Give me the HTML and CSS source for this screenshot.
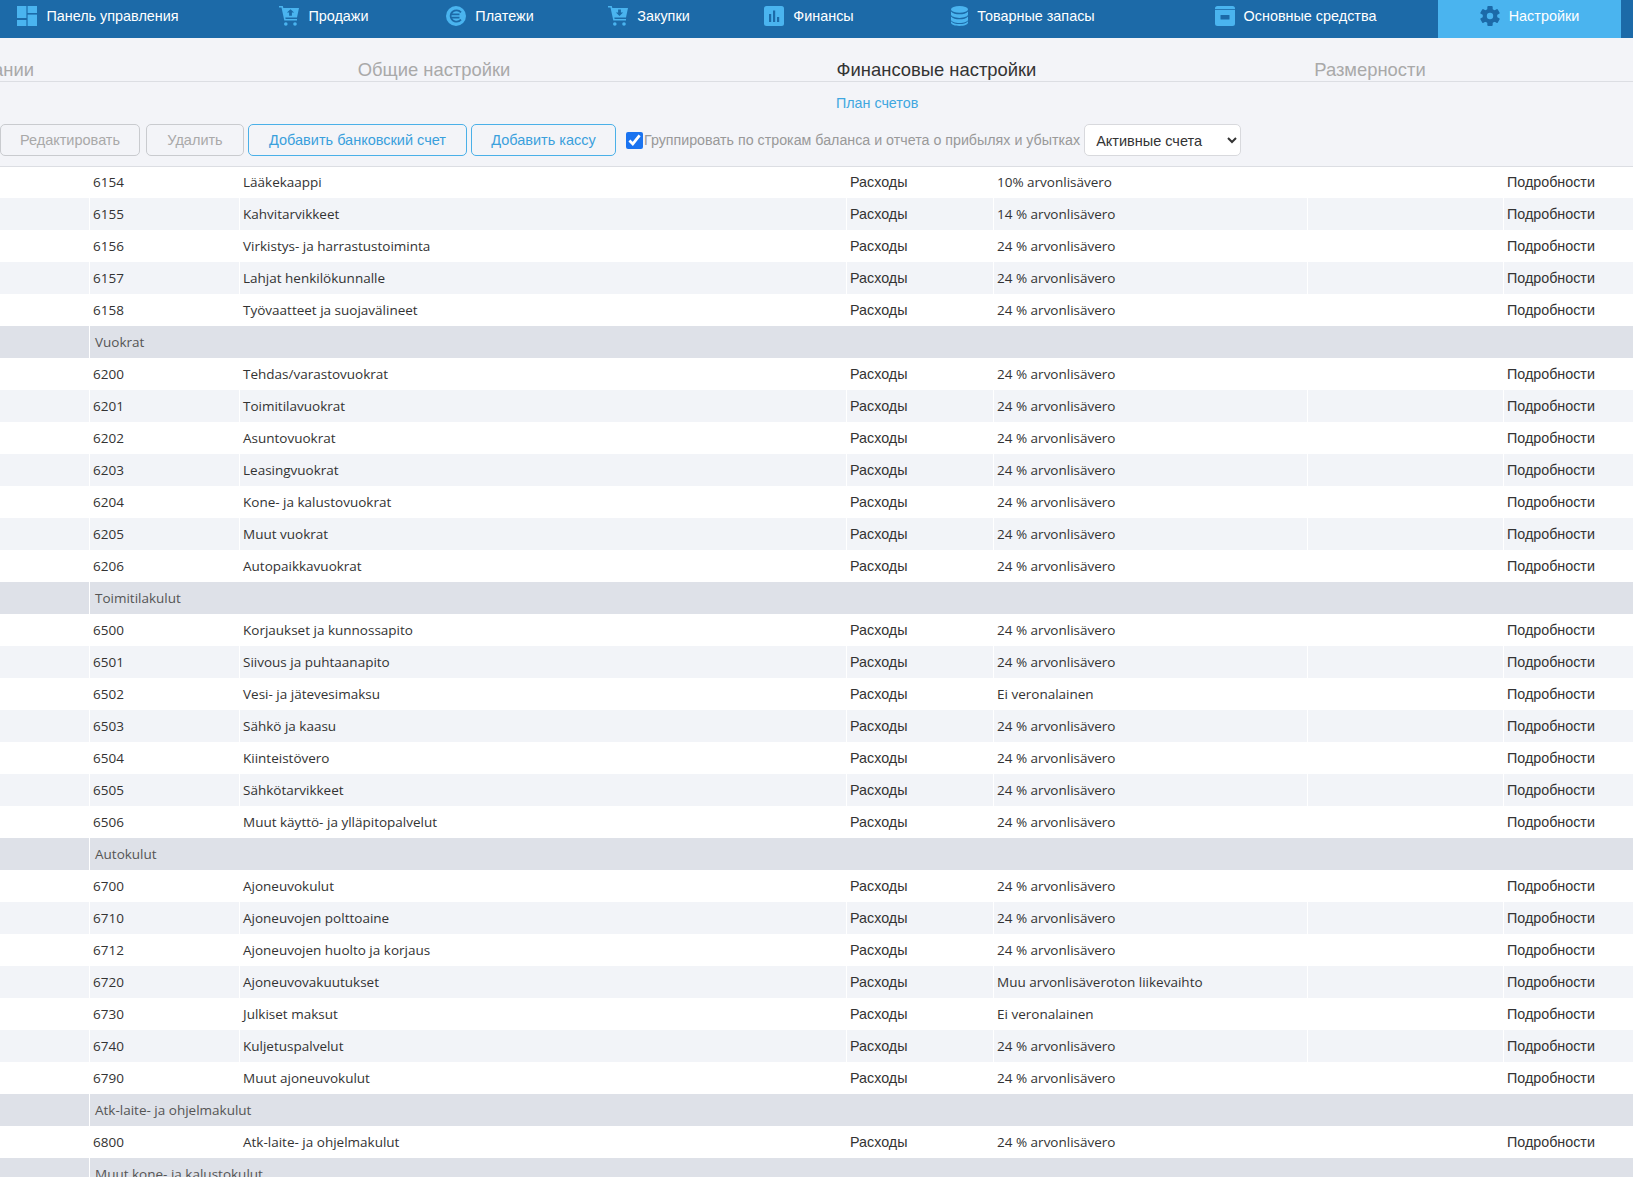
FILE: index.html
```html
<!DOCTYPE html>
<html lang="ru">
<head>
  <meta charset="UTF-8" />
  <title>Финансовые настройки</title>
  <link rel="stylesheet" href="styles.css">
</head>
<body>
  <nav class="nav">
    <a class="nav-item nav-first">
      <svg class="icon" viewBox="0 0 20 20"><rect x="0" y="0" width="9.4" height="12"/><rect x="0" y="14" width="9.4" height="6"/><rect x="10.6" y="0" width="9.4" height="7"/><rect x="10.6" y="8.6" width="9.4" height="11.4"/></svg>
      Панель управления
    </a>
    <a class="nav-item">
      <svg class="icon" viewBox="0 0 20 20"><path d="M2.5 1.5H0V0h3.8l.5 2H20l-2 9.5H6.3l.3 1.6H18v1.5H5.3L2.5 1.5z"/><path class="cut" d="M11.5 3.2l3.6 3.4h-2.2v3.2h-2.8V6.6H7.9z"/><circle cx="6.8" cy="18" r="1.8"/><circle cx="16" cy="18" r="1.8"/></svg>
      Продажи
    </a>
    <a class="nav-item">
      <svg class="icon" viewBox="0 0 20 20"><circle cx="10" cy="10" r="10"/><path class="cut-line" d="M15 6.3A6 6 0 0 0 4.6 10 6 6 0 0 0 15 13.7M5 8.4h8.5M5 11.6h8.5"/></svg>
      Платежи
    </a>
    <a class="nav-item">
      <svg class="icon" viewBox="0 0 20 20"><path d="M2.5 1.5H0V0h3.8l.5 2H20l-2 9.5H6.3l.3 1.6H18v1.5H5.3L2.5 1.5z"/><path class="cut" d="M11.5 10l-3.6-3.4h2.2V3.4h2.8v3.2h2.2z"/><circle cx="6.8" cy="18" r="1.8"/><circle cx="16" cy="18" r="1.8"/></svg>
      Закупки
    </a>
    <a class="nav-item">
      <svg class="icon" viewBox="0 0 20 20"><rect width="20" height="20" rx="2.5"/><rect class="cut" x="5" y="8" width="2.2" height="8"/><rect class="cut" x="9" y="4.5" width="2.2" height="11.5"/><rect class="cut" x="13" y="11" width="2.2" height="5"/></svg>
      Финансы
    </a>
    <a class="nav-item">
      <svg class="icon icon-db" viewBox="0 0 17 20"><ellipse cx="8.5" cy="3.4" rx="8.5" ry="3.4"/><path d="M0 5.4C1.5 7.6 5 8.2 8.5 8.2S15.5 7.6 17 5.4v3.2C17 10.500 13 11.900 8.500 11.900S0 10.500 0 8.600z"/><path d="M0 10.500C1.500 12.700 5 13.300 8.500 13.300S15.500 12.700 17 10.500v3.300C17 15.700 13 17 8.500 17S0 15.700 0 13.800z"/><path d="M0 15.200C1.500 17.400 5 18 8.500 18S15.500 17.400 17 15.200v1.400C17 18.700 13 20 8.500 20S0 18.700 0 16.600z"/></svg>
      Товарные запасы
    </a>
    <a class="nav-item">
      <svg class="icon" viewBox="0 0 20 20"><path d="M2.500 0h15A2.500 2.500 0 0 1 20 2.500V17.500A2.500 2.500 0 0 1 17.500 20h-15A2.500 2.500 0 0 1 0 17.500V2.500A2.500 2.500 0 0 1 2.500 0z"/><rect class="cut" x="0" y="3" width="20" height="0.8"/><rect class="cut" x="5.500" y="9" width="9" height="4.500" rx="0.500"/></svg>
      Основные средства
    </a>
    <a class="nav-item nav-active">
      <svg class="icon icon-gear" viewBox="0 0 20 20"><rect x="7.300" y="0" width="5.400" height="20" rx="1"/><rect x="7.300" y="0" width="5.400" height="20" rx="1" transform="rotate(60 10 10)"/><rect x="7.300" y="0" width="5.400" height="20" rx="1" transform="rotate(120 10 10)"/><circle cx="10" cy="10" r="7.300"/><circle class="hole" cx="10" cy="10" r="3.200"/></svg>
      Настройки
    </a>
  </nav>

  <div class="tabs">
    <div class="tab tab-cut">Настройки компании</div>
    <div class="tab">Общие настройки</div>
    <div class="tab tab-active">Финансовые настройки</div>
    <div class="tab">Размерности</div>
  </div>

  <div class="subtabs"><a class="subtab">План счетов</a></div>

  <div class="toolbar">
    <button class="btn btn-edit" disabled>Редактировать</button>
    <button class="btn btn-delete" disabled>Удалить</button>
    <button class="btn btn-primary btn-bank">Добавить банковский счет</button>
    <button class="btn btn-primary btn-cash">Добавить кассу</button>
    <label class="group-check"><input type="checkbox" checked>Группировать по строкам баланса и отчета о прибылях и убытках</label>
    <select class="filter"><option>Активные счета</option></select>
  </div>

  <table class="accounts">
    <colgroup>
      <col class="col-a"><col class="col-b"><col class="col-c"><col class="col-d"><col class="col-e"><col class="col-f"><col>
    </colgroup>
    <tbody>
      <tr><td></td><td>6154</td><td>Lääkekaappi</td><td class="ru">Расходы</td><td>10% arvonlisävero</td><td></td><td class="ru">Подробности</td></tr>
      <tr><td></td><td>6155</td><td>Kahvitarvikkeet</td><td class="ru">Расходы</td><td>14 % arvonlisävero</td><td></td><td class="ru">Подробности</td></tr>
      <tr><td></td><td>6156</td><td>Virkistys- ja harrastustoiminta</td><td class="ru">Расходы</td><td>24 % arvonlisävero</td><td></td><td class="ru">Подробности</td></tr>
      <tr><td></td><td>6157</td><td>Lahjat henkilökunnalle</td><td class="ru">Расходы</td><td>24 % arvonlisävero</td><td></td><td class="ru">Подробности</td></tr>
      <tr><td></td><td>6158</td><td>Työvaatteet ja suojavälineet</td><td class="ru">Расходы</td><td>24 % arvonlisävero</td><td></td><td class="ru">Подробности</td></tr>
      <tr class="group"><td></td><td colspan="6">Vuokrat</td></tr>
      <tr><td></td><td>6200</td><td>Tehdas/varastovuokrat</td><td class="ru">Расходы</td><td>24 % arvonlisävero</td><td></td><td class="ru">Подробности</td></tr>
      <tr><td></td><td>6201</td><td>Toimitilavuokrat</td><td class="ru">Расходы</td><td>24 % arvonlisävero</td><td></td><td class="ru">Подробности</td></tr>
      <tr><td></td><td>6202</td><td>Asuntovuokrat</td><td class="ru">Расходы</td><td>24 % arvonlisävero</td><td></td><td class="ru">Подробности</td></tr>
      <tr><td></td><td>6203</td><td>Leasingvuokrat</td><td class="ru">Расходы</td><td>24 % arvonlisävero</td><td></td><td class="ru">Подробности</td></tr>
      <tr><td></td><td>6204</td><td>Kone- ja kalustovuokrat</td><td class="ru">Расходы</td><td>24 % arvonlisävero</td><td></td><td class="ru">Подробности</td></tr>
      <tr><td></td><td>6205</td><td>Muut vuokrat</td><td class="ru">Расходы</td><td>24 % arvonlisävero</td><td></td><td class="ru">Подробности</td></tr>
      <tr><td></td><td>6206</td><td>Autopaikkavuokrat</td><td class="ru">Расходы</td><td>24 % arvonlisävero</td><td></td><td class="ru">Подробности</td></tr>
      <tr class="group"><td></td><td colspan="6">Toimitilakulut</td></tr>
      <tr><td></td><td>6500</td><td>Korjaukset ja kunnossapito</td><td class="ru">Расходы</td><td>24 % arvonlisävero</td><td></td><td class="ru">Подробности</td></tr>
      <tr><td></td><td>6501</td><td>Siivous ja puhtaanapito</td><td class="ru">Расходы</td><td>24 % arvonlisävero</td><td></td><td class="ru">Подробности</td></tr>
      <tr><td></td><td>6502</td><td>Vesi- ja jätevesimaksu</td><td class="ru">Расходы</td><td>Ei veronalainen</td><td></td><td class="ru">Подробности</td></tr>
      <tr><td></td><td>6503</td><td>Sähkö ja kaasu</td><td class="ru">Расходы</td><td>24 % arvonlisävero</td><td></td><td class="ru">Подробности</td></tr>
      <tr><td></td><td>6504</td><td>Kiinteistövero</td><td class="ru">Расходы</td><td>24 % arvonlisävero</td><td></td><td class="ru">Подробности</td></tr>
      <tr><td></td><td>6505</td><td>Sähkötarvikkeet</td><td class="ru">Расходы</td><td>24 % arvonlisävero</td><td></td><td class="ru">Подробности</td></tr>
      <tr><td></td><td>6506</td><td>Muut käyttö- ja ylläpitopalvelut</td><td class="ru">Расходы</td><td>24 % arvonlisävero</td><td></td><td class="ru">Подробности</td></tr>
      <tr class="group"><td></td><td colspan="6">Autokulut</td></tr>
      <tr><td></td><td>6700</td><td>Ajoneuvokulut</td><td class="ru">Расходы</td><td>24 % arvonlisävero</td><td></td><td class="ru">Подробности</td></tr>
      <tr><td></td><td>6710</td><td>Ajoneuvojen polttoaine</td><td class="ru">Расходы</td><td>24 % arvonlisävero</td><td></td><td class="ru">Подробности</td></tr>
      <tr><td></td><td>6712</td><td>Ajoneuvojen huolto ja korjaus</td><td class="ru">Расходы</td><td>24 % arvonlisävero</td><td></td><td class="ru">Подробности</td></tr>
      <tr><td></td><td>6720</td><td>Ajoneuvovakuutukset</td><td class="ru">Расходы</td><td>Muu arvonlisäveroton liikevaihto</td><td></td><td class="ru">Подробности</td></tr>
      <tr><td></td><td>6730</td><td>Julkiset maksut</td><td class="ru">Расходы</td><td>Ei veronalainen</td><td></td><td class="ru">Подробности</td></tr>
      <tr><td></td><td>6740</td><td>Kuljetuspalvelut</td><td class="ru">Расходы</td><td>24 % arvonlisävero</td><td></td><td class="ru">Подробности</td></tr>
      <tr><td></td><td>6790</td><td>Muut ajoneuvokulut</td><td class="ru">Расходы</td><td>24 % arvonlisävero</td><td></td><td class="ru">Подробности</td></tr>
      <tr class="group"><td></td><td colspan="6">Atk-laite- ja ohjelmakulut</td></tr>
      <tr><td></td><td>6800</td><td>Atk-laite- ja ohjelmakulut</td><td class="ru">Расходы</td><td>24 % arvonlisävero</td><td></td><td class="ru">Подробности</td></tr>
      <tr class="group"><td></td><td colspan="6">Muut kone- ja kalustokulut</td></tr>
    </tbody>
  </table>
</body>
</html>
```

FILE: styles.css
```css
* {
  box-sizing: border-box;
}

html, body {
  height: 100%;
  overflow: hidden;
}

body {
  margin: 0;
  background: #f3f4f8;
  color: #333;
  font-family: "Liberation Sans", Arial, sans-serif;
  font-size: 15px;
}

/* top nav */
.nav {
  display: grid;
  grid-template-columns: 241px 166px 166px 152px 168px 260px 285px 183px 1fr;
  height: 38px;
  background: #1c6aa8;
}

.nav-item {
  display: flex;
  align-items: center;
  justify-content: center;
  gap: 9px;
  height: 32px;
  color: #fff;
  font-size: 14.4px;
  white-space: nowrap;
}

.nav-first {
  padding-right: 45px;
}

.nav-active {
  height: 38px;
  padding-bottom: 6px;
  background: #4ab4ef;
}

.icon {
  flex: none;
  width: 20px;
  height: 20px;
  fill: #4ab4ef;
}

.icon-db {
  width: 17px;
}

.icon .cut {
  fill: #1c6aa8;
}

.icon .cut-line {
  fill: none;
  stroke: #1c6aa8;
  stroke-width: 1.8;
}

.icon-gear {
  fill: #1c6aa8;
}

.icon-gear .hole {
  fill: #4ab4ef;
}

/* tabs */
.tabs {
  display: grid;
  grid-template-columns: 196px 476px 529px 338px;
  height: 44px;
  border-bottom: 1px solid #dcdee3;
}

.tab {
  padding-top: 21px;
  color: #a9a9a9;
  font-size: 18.4px;
  line-height: 22px;
  text-align: center;
  white-space: nowrap;
}

.tab-cut {
  display: flex;
  justify-content: flex-end;
  padding-right: 162px;
}

.tab-active {
  color: #333;
}

.subtabs {
  height: 42px;
  padding: 12px 0 0 836px;
  line-height: 18px;
}

.subtab {
  color: #3fa7e0;
  font-size: 14.3px;
}

/* toolbar */
.toolbar {
  display: flex;
  align-items: center;
  height: 43px;
  padding-bottom: 10px;
  border-bottom: 1px solid #dcdee3;
}

.btn {
  height: 32px;
  margin-right: 4px;
  padding: 0;
  border: 1px solid #c9cbcf;
  border-radius: 5px;
  background: transparent;
  color: #a9a9a9;
  font-family: inherit;
  font-size: 14.5px;
}

.btn-edit {
  width: 140px;
  margin-right: 6px;
}

.btn-delete {
  width: 98px;
}

.btn-bank {
  width: 219px;
}

.btn-cash {
  width: 145px;
}

.btn-primary {
  border-color: #4ab0e8;
  color: #3aa0dc;
}

.group-check {
  display: flex;
  align-items: center;
  margin-left: 6px;
  color: #999;
  font-size: 14.25px;
  white-space: nowrap;
}

.group-check input {
  width: 17px;
  height: 17px;
  margin: 0 1px 0 0;
  accent-color: #1a73f0;
}

.filter {
  width: 157px;
  height: 32px;
  margin-left: 4px;
  padding: 1px 0 0 7px;
  border: 1px solid #d8d9dd;
  border-radius: 5px;
  background: #fff;
  color: #333;
  font-family: inherit;
  font-size: 14.5px;
}

/* accounts table */
.accounts {
  width: 100%;
  table-layout: fixed;
  border-collapse: separate;
  border-spacing: 0;
  font-family: "Open Sans", "Noto Sans", sans-serif;
  font-size: 13.5px;
}

.col-a { width: 89px; }
.col-b { width: 150px; }
.col-c { width: 607px; }
.col-d { width: 147px; }
.col-e { width: 314px; }
.col-f { width: 196px; }

.accounts td {
  height: 32px;
  padding: 0 3px;
  border-left: 1px solid #fff;
  white-space: nowrap;
}

.accounts td:first-child {
  border-left: 0;
}

.accounts tr:first-child td {
  height: 31px;
  padding-bottom: 1px;
}

.accounts tr {
  background: #fff;
}

.accounts tr:nth-child(even) {
  background: #f2f4f8;
}

.accounts .ru {
  font-family: "Liberation Sans", Arial, sans-serif;
  font-size: 14.3px;
}

.accounts tr.group {
  background: #dee1e8;
  color: #555;
}

.accounts tr.group td {
  padding-left: 5px;
}
```
